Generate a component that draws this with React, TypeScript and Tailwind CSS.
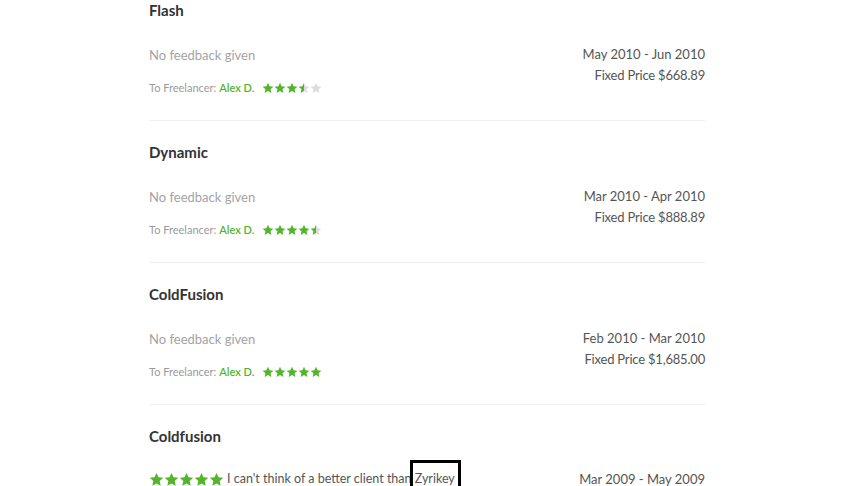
const GREEN = '#52b52b';

type Job = {
  title: string;
  dates: string;
  price: string;
  rating: number;
};

const jobs: Job[] = [
  { title: 'Flash', dates: 'May 2010 - Jun 2010', price: 'Fixed Price $668.89', rating: 3.5 },
  { title: 'Dynamic', dates: 'Mar 2010 - Apr 2010', price: 'Fixed Price $888.89', rating: 4.5 },
  { title: 'ColdFusion', dates: 'Feb 2010 - Mar 2010', price: 'Fixed Price $1,685.00', rating: 5 },
];

export default function App() {
  return (
    <div className="h-[486px] w-[863px] overflow-hidden bg-white" style={{ fontFamily: 'Lato, "Open Sans", sans-serif' }}>
      <div className="ml-[149px] w-[556px]">
        {jobs.map((job, i) => (
          <JobRow key={job.title} job={job} index={i} />
        ))}

        <section className="pt-[21px]">
          <h3 className="h-5 text-[15px] font-bold leading-5 text-[#333]">Coldfusion</h3>
          <div className="mt-[23px] flex items-center justify-between">
            <div className="flex items-center">
              <Stars rating={5} size={15} gap={0} id="big" />
              <span className="ml-[3px] text-[12.5px] leading-5 text-[#555]">
                I can&apos;t think of a better client than{' '}
                <span className="relative">
                  Zyrikey
                  <span className="absolute -left-[5px] -right-[6px] -top-[11px] h-[40px] border-[3px] border-black" />
                </span>
              </span>
            </div>
            <span className="text-[13px] leading-5 text-[#555]">Mar 2009 - May 2009</span>
          </div>
        </section>
      </div>
    </div>
  );
}

function JobRow({ job, index }: { job: Job; index: number }) {
  return (
    <section className={index === 0 ? 'border-b border-[#f0f0f0]' : 'border-b border-[#f0f0f0] pt-[21px]'}>
      <h3 className="h-5 text-[15px] font-bold leading-5 text-[#333]">{job.title}</h3>
      <div className="flex justify-between">
        <div className="pt-[25px]">
          <p className="text-[13px] leading-5 text-[#a3a3a3]">No feedback given</p>
          <div className="mt-[15px] flex h-4 items-center text-[11px] leading-4">
            <span className="text-[#9a9a9a]">To Freelancer:</span>
            <span className="ml-[3px] font-semibold" style={{ color: GREEN }}>Alex D.</span>
            <span className="ml-[8px]">
              <Stars rating={job.rating} size={12} gap={0} id={`r${index}`} />
            </span>
          </div>
        </div>
        <div className="pt-[24px] text-right text-[13px] leading-[21px] text-[#555]">
          <p>{job.dates}</p>
          <p className="tracking-[-0.2px]">{job.price}</p>
        </div>
      </div>
      <div className="h-[24px]" />
    </section>
  );
}

function Stars({ rating, size, gap, id }: { rating: number; size: number; gap: number; id: string }) {
  return (
    <span className="flex items-center" style={{ gap }}>
      {[0, 1, 2, 3, 4].map((n) => {
        const fill = Math.max(0, Math.min(1, rating - n));
        const gid = `${id}-${n}`;
        return (
          <svg key={n} width={size} height={size} viewBox="0 0 24 24">
            <defs>
              <linearGradient id={gid} x1="0" x2="1" y1="0" y2="0">
                <stop offset={fill} stopColor={GREEN} />
                <stop offset={fill} stopColor="#dcdcdc" />
              </linearGradient>
            </defs>
            <path
              d="M12 1.5l3.2 7 7.6.8-5.7 5.2 1.6 7.5L12 18.2 5.3 22l1.6-7.5L1.2 9.3l7.6-.8z"
              fill={`url(#${gid})`}
            />
          </svg>
        );
      })}
    </span>
  );
}
